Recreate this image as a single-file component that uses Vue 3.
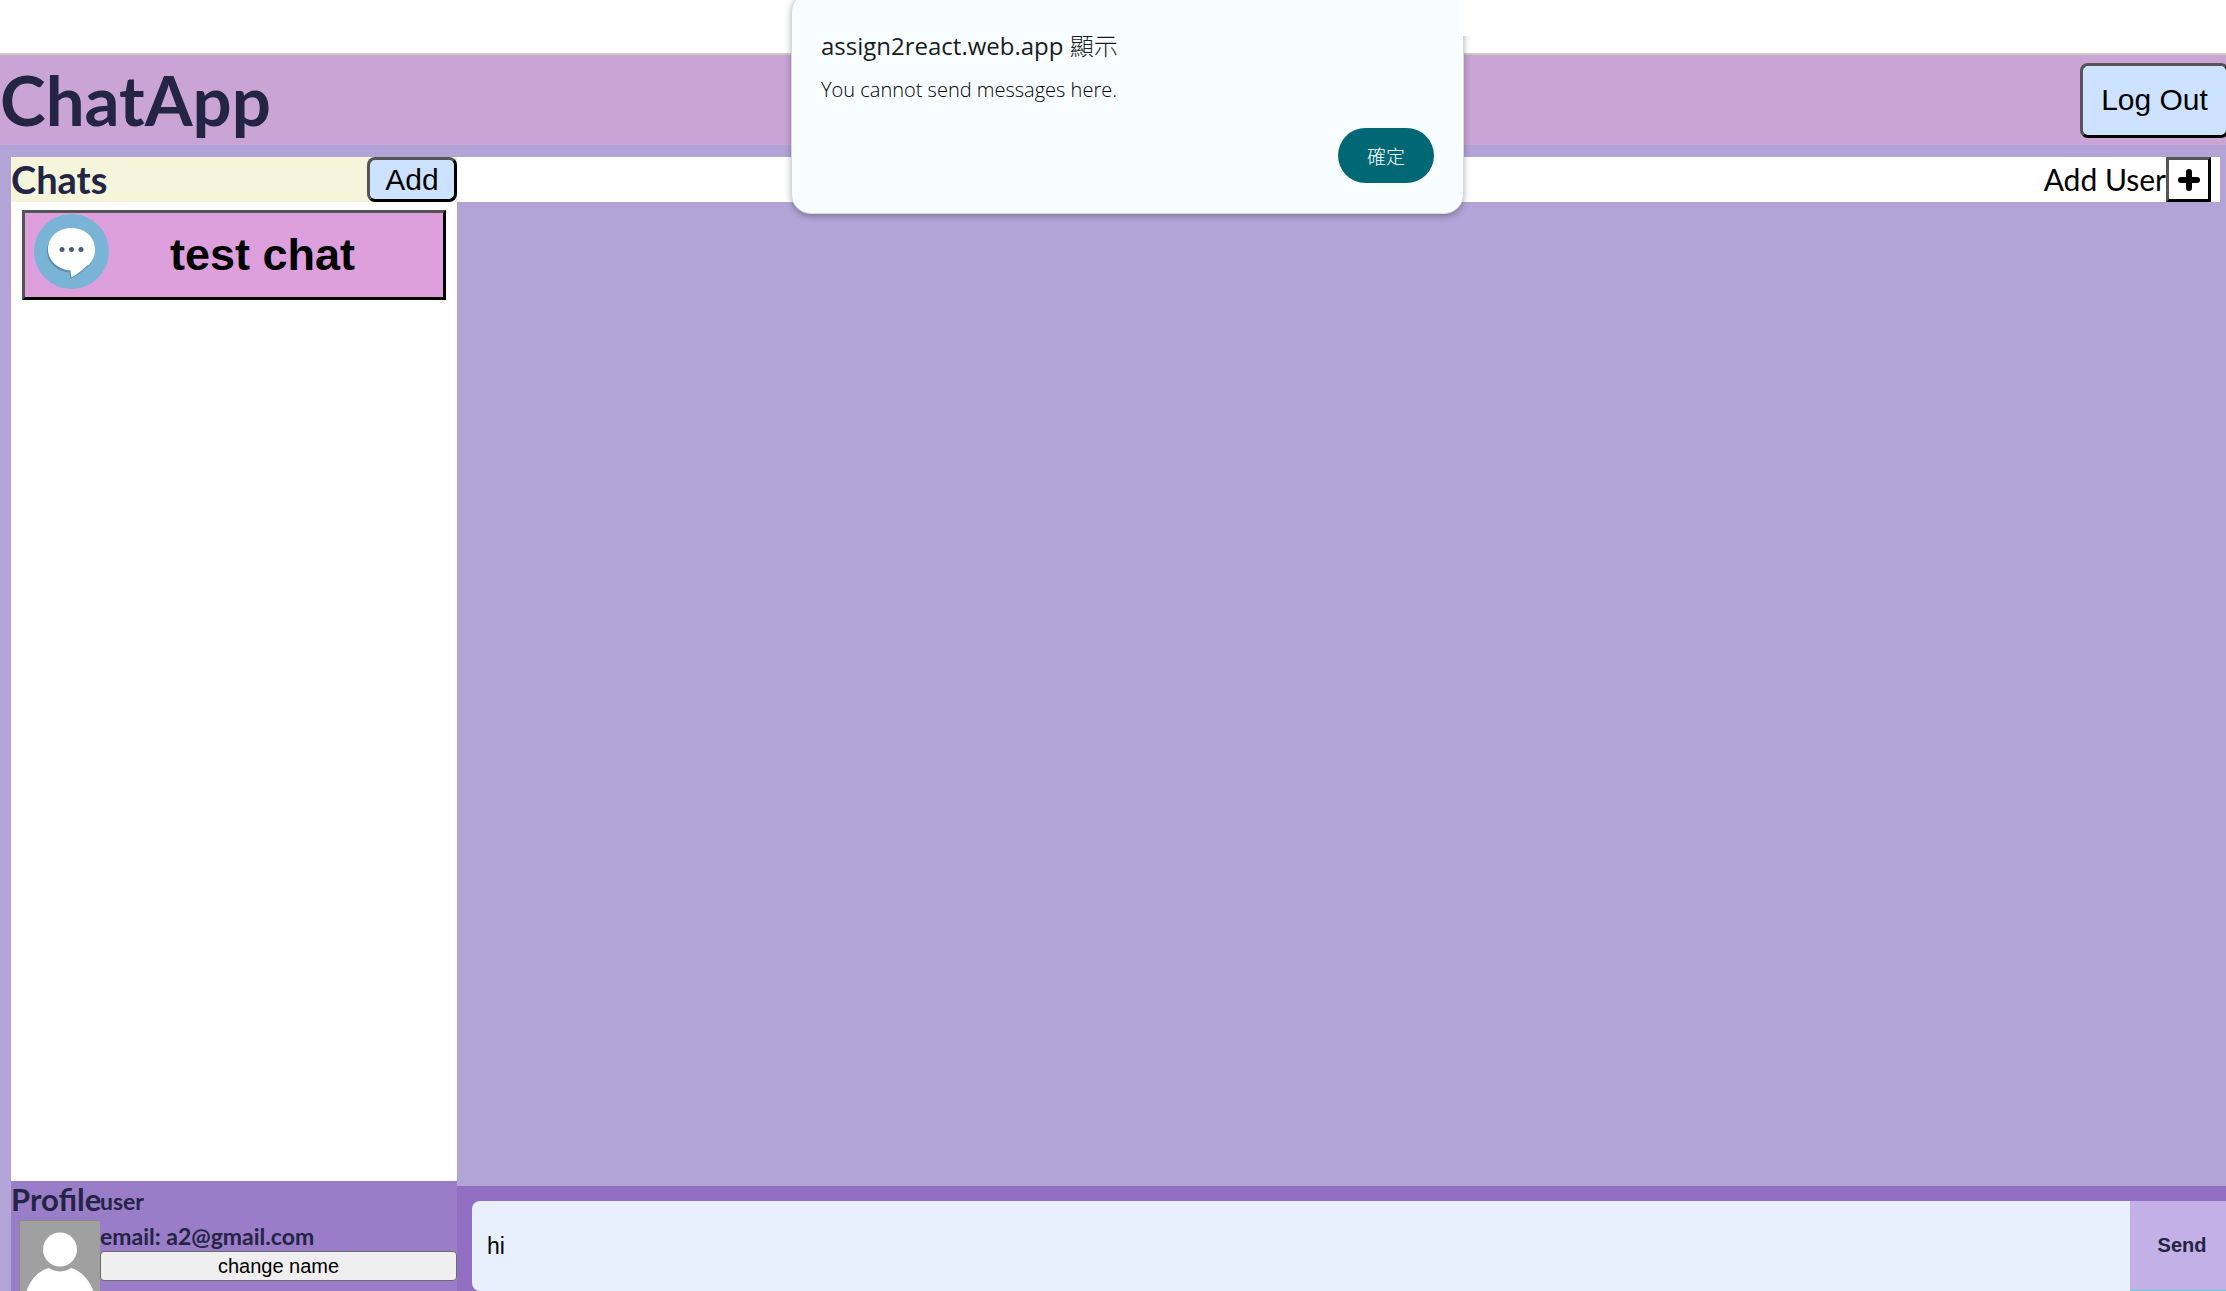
<script setup>
import { ref } from 'vue'

const message = ref('hi')
const chats = ref([{ id: 1, name: 'test chat' }])
</script>

<template>
  <div class="app">
    <div class="strip"></div>
    <header class="header">
      <h1>ChatApp</h1>
      <button class="blue logout" type="button">Log Out</button>
    </header>

    <div class="body">
      <aside class="sidebar">
        <div class="chats-bar">
          <h2>Chats</h2>
          <button class="blue add" type="button">Add</button>
        </div>
        <div class="list">
          <button v-for="chat in chats" :key="chat.id" class="chat" type="button">
            <svg class="bubble" viewBox="0 0 75 75" aria-hidden="true">
              <circle cx="37.500" cy="37.500" r="37.500" fill="#79b3d6" />
              <path transform="translate(-1 2)" fill="#5f8fae" d="M37.500 14C24 14 14 23 14 35.500C14 47 24 55.500 36.500 56.500L37.500 63C44 60 48 56 52 52.500C58 49 61 43 61 35.500C61 23 51 14 37.500 14Z" />
              <path fill="#fff" d="M37.500 14C24 14 14 23 14 35.500C14 47 24 55.500 36.500 56.500L37.500 63.500C44 60 48 56 52 52.500C58 49 61 43 61 35.500C61 23 51 14 37.500 14Z" />
              <g fill="#4b5d7a"><circle cx="28" cy="35.500" r="2.500" /><circle cx="37.500" cy="35.500" r="2.500" /><circle cx="47" cy="35.500" r="2.500" /></g>
            </svg>
            <span class="chat-name">{{ chat.name }}</span>
          </button>
        </div>
        <section class="profile">
          <div class="profile-left">
            <h3>Profile</h3>
            <svg class="avatar" viewBox="0 0 81 81" aria-hidden="true">
              <rect width="81" height="81" fill="#a0a0a0" />
              <path d="M0 0.500H81M0.500 0V81" stroke="#8a8a8a" fill="none" />
              <circle cx="41" cy="29.500" r="17" fill="#fff" />
              <path fill="#fff" d="M7 73C10 62 18 51 30 48C36 52.500 46 52.500 52 48C63 51 72 62 75 73V81H7Z" />
            </svg>
          </div>
          <div class="profile-right">
            <p>user</p>
            <p>email: a2@gmail.com</p>
            <button class="change" type="button">change name</button>
          </div>
        </section>
      </aside>

      <main class="main">
        <div class="user-bar">
          <span id="add-user">Add User</span>
          <button class="plus" type="button" aria-labelledby="add-user">
            <svg viewBox="0 0 22 22" aria-hidden="true"><path d="M11 3V19M3 11H19" stroke="#000" stroke-width="6" stroke-linecap="round" /></svg>
          </button>
        </div>
        <div class="messages"></div>
        <form class="composer" @submit.prevent>
          <input v-model="message" type="text" aria-label="Message" />
          <button class="send" type="submit">Send</button>
        </form>
      </main>
    </div>

    <div class="alert" role="alertdialog" aria-labelledby="alert-title" aria-describedby="alert-text">
      <h4 id="alert-title">assign2react.web.app <span class="cjk">顯示</span></h4>
      <p id="alert-text">You cannot send messages here.</p>
      <button class="ok" type="button">確定</button>
    </div>
  </div>
</template>

<style>
body {
  margin: 0;
}
</style>

<style scoped>
* {
  box-sizing: border-box;
}
h1, h2, h3, h4, p {
  margin: 0;
}
.app {
  position: relative;
  display: flex;
  flex-direction: column;
  height: 100vh;
  overflow: hidden;
  background: #b2a4d6;
  color: #242444;
  font-family: Lato, sans-serif;
}
button, input {
  font-family: "Liberation Sans", Arial, sans-serif;
}
button {
  color: #000;
  padding: 0;
}
.strip {
  flex: none;
  height: 55px;
  background: #fff;
  border-bottom: 2px solid #c7ccc7;
}
.header {
  flex: none;
  display: flex;
  align-items: center;
  justify-content: space-between;
  height: 90px;
  background: #c9a4d5;
}
h1, h2, h3 {
  font-weight: 700;
}
h1 {
  font-size: 69px;
  line-height: 84px;
}
.blue {
  border: 3px outset #000;
  border-radius: 8px;
  background: #cce2ff;
  font-size: 30px;
}
.logout {
  height: 75px;
  width: 149px;
  margin-right: -3px;
}
.body {
  flex: 1;
  min-height: 0;
  display: flex;
  padding: 12px 0 0 11px;
}
.sidebar {
  flex: none;
  display: flex;
  flex-direction: column;
  width: 446px;
  background: #fff;
}
.chats-bar {
  display: flex;
  align-items: center;
  justify-content: space-between;
  height: 45px;
  background: #f5f5dc;
}
h2 {
  font-size: 38px;
  line-height: 45px;
}
.add {
  width: 90px;
  height: 45px;
}
.list {
  flex: 1;
  padding: 8px 11px;
}
.chat {
  display: flex;
  align-items: flex-start;
  width: 100%;
  height: 90px;
  padding: 1px 9px;
  border: 3px outset #000;
  background: #dda0dd;
}
.bubble {
  flex: none;
  width: 75px;
  height: 75px;
}
.chat-name {
  flex: 1;
  padding-right: 18px;
  font-size: 45px;
  line-height: 82px;
  font-weight: 700;
}
.profile {
  flex: none;
  display: flex;
  height: 110px;
  overflow: hidden;
  background: #9a7dc8;
}
.profile-left {
  flex: none;
  width: 89px;
}
h3 {
  font-size: 31px;
  line-height: 37px;
}
.avatar {
  display: block;
  width: 81px;
  height: 81px;
  margin: 2px 0 0 8px;
}
.profile-right {
  flex: 1;
  font-size: 23px;
  font-weight: 700;
}
.profile-right p {
  height: 35px;
  line-height: 41px;
}
.change {
  display: block;
  width: 100%;
  height: 30px;
  border: 1px solid #6b6b6b;
  border-radius: 4px;
  background: #efefef;
  font-size: 20px;
}
.main {
  flex: 1;
  min-width: 0;
  display: flex;
  flex-direction: column;
}
.user-bar {
  display: flex;
  align-items: flex-start;
  justify-content: flex-end;
  height: 45px;
  margin-right: 6px;
  padding-right: 9px;
  background: #fff;
  color: #000;
  font-size: 30px;
  line-height: 44px;
}
.plus {
  display: grid;
  place-items: center;
  width: 45px;
  height: 45px;
  border: 3px outset #000;
  background: #fff;
}
.plus svg {
  width: 22px;
  height: 22px;
}
.messages {
  flex: 1;
}
.composer {
  display: flex;
  height: 105px;
  padding: 15px 0 0 15px;
  background: #936fc4;
}
.composer input {
  flex: 1;
  min-width: 0;
  padding: 0 15px;
  border: 0;
  border-radius: 8px 0 0 8px;
  background: #e8f0fe;
  color: #000;
  font-size: 23px;
}
.send {
  width: 96px;
  padding-left: 8px;
  border: 0;
  border-bottom: 1px solid #66c6d4;
  background: #c2b0e6;
  color: #242444;
  font-size: 20px;
  font-weight: 700;
}
.alert {
  position: absolute;
  top: -8px;
  left: calc(50% - 322px);
  display: flex;
  flex-direction: column;
  width: 673px;
  height: 222px;
  padding: 35px 29px 30px;
  border: 1px solid #d2dbe0;
  border-radius: 20px;
  background: #f8fdff;
  box-shadow: 0 2px 6px rgba(0, 0, 0, 0.3);
  color: #191c1d;
  font-family: "Open Sans", "Noto Sans CJK TC", sans-serif;
}
.alert::after {
  content: "";
  position: absolute;
  top: 0;
  right: -8px;
  width: 12px;
  height: 43px;
  background: #fff;
}
h4 {
  font-size: 24px;
  line-height: 36px;
  font-weight: 400;
}
.cjk {
  font-weight: 300;
}
.alert p {
  margin-top: 8px;
  font-size: 20px;
  line-height: 36px;
  font-weight: 300;
  color: #000;
}
.ok {
  align-self: flex-end;
  width: 96px;
  height: 55px;
  margin-top: auto;
  border: 0;
  border-radius: 28px;
  background: #006874;
  color: #fff;
  font-family: "Noto Sans CJK TC", sans-serif;
  font-size: 19px;
  font-weight: 300;
}
</style>
